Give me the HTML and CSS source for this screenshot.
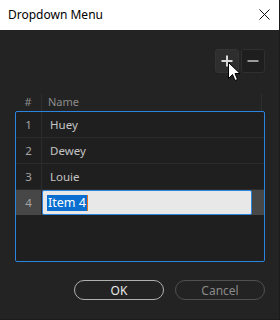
FILE: index.html
```html
<!DOCTYPE html>
<html lang="en">
<head>
    <meta charset="UTF-8">
    <title>Dropdown Menu</title>
    <link rel="stylesheet" href="styles.css">
</head>
<body>
    <div class="window">
        <div class="titlebar">
            <span class="title">Dropdown Menu</span>
            <svg class="close" width="11" height="11" viewBox="0 0 11 11">
                <path d="M0.5 0.5 L10.5 10.5 M10.5 0.5 L0.5 10.5" stroke="#111" stroke-width="1" fill="none"/>
            </svg>
        </div>

        <div class="content">
            <div class="toolbar">
                <button class="tool-btn add">
                    <svg width="12" height="12" viewBox="0 0 12 12">
                        <path d="M6 0.5 V11.5 M0.5 6 H11.5" stroke="#d8d8d8" stroke-width="2" fill="none"/>
                    </svg>
                </button>
                <button class="tool-btn remove">
                    <svg width="12" height="12" viewBox="0 0 12 12">
                        <path d="M0.5 6 H11.5" stroke="#9a9a9a" stroke-width="2" fill="none"/>
                    </svg>
                </button>
                <!-- mouse pointer over the + button -->
                <svg class="cursor" width="13" height="20" viewBox="0 0 13 20">
                    <path d="M0.5 0.5 V16.5 L4.5 12.5 L7 18.5 L9.5 17.5 L7 11.5 H12 Z" fill="#fff" stroke="#000" stroke-width="1"/>
                </svg>
            </div>

            <div class="table-head">
                <div class="col-num">#</div>
                <div class="col-name">Name</div>
            </div>

            <div class="list">
                <div class="row">
                    <div class="col-num">1</div>
                    <div class="col-name">Huey</div>
                </div>
                <div class="row">
                    <div class="col-num">2</div>
                    <div class="col-name">Dewey</div>
                </div>
                <div class="row">
                    <div class="col-num">3</div>
                    <div class="col-name">Louie</div>
                </div>
                <div class="row editing">
                    <div class="col-num">4</div>
                    <div class="col-name">
                        <div class="edit-box"><span class="selected">Item 4</span><span class="caret"></span></div>
                    </div>
                </div>
            </div>

            <div class="actions">
                <button class="btn ok">OK</button>
                <button class="btn cancel">Cancel</button>
            </div>
        </div>
    </div>
</body>
</html>
```

FILE: styles.css
```css
body {
    margin: 0;
    padding: 0;
    background-color: #232323;
    font-family: "Noto Sans", "Open Sans", sans-serif;
}

.window {
    width: 279px;
    height: 319px;
    border-right: 1px solid #1b1b1b;
    border-bottom: 1px solid #1b1b1b;
    background-color: #232323;
}

.titlebar {
    height: 30px;
    background-color: #ffffff;
    display: flex;
    align-items: center;
    justify-content: space-between;
    padding: 0 9px 0 8px;
    box-sizing: border-box;
}

.title {
    font-size: 12px;
    color: #000;
    margin-top: -1px;
}

.close {
    margin-top: -1px;
}

.content {
    padding: 19px 14px 0 15px;
}

.toolbar {
    position: relative;
    display: flex;
    justify-content: flex-end;
    gap: 2px;
}

.tool-btn {
    width: 24px;
    height: 24px;
    padding: 0;
    border: 1px solid #2f2f2f;
    border-radius: 3px;
    display: flex;
    align-items: center;
    justify-content: center;
}

.tool-btn.add {
    background-color: #2e2e2e;
    border-color: #343434;
}

.tool-btn.remove {
    background-color: #1e1e1e;
}

.cursor {
    position: absolute;
    left: 213px;
    top: 13px;
}

.table-head {
    display: flex;
    height: 17px;
    margin-top: 21px;
    font-size: 11px;
    color: #8c8c8c;
    margin-right: 3px;
    border-right: 1px solid #2e2e2e;
}

.table-head .col-num {
    width: 26px;
    border-right: 1px solid #2e2e2e;
    text-align: center;
    line-height: 15px;
}

.table-head .col-name {
    padding-left: 6px;
    line-height: 15px;
}

.list {
    height: 149px;
    border: 1px solid #2a84e0;
    border-radius: 2px;
    background-color: #1f1f1f;
}

.row {
    display: flex;
    height: 25px;
    border-bottom: 1px solid #2c2c2c;
    font-size: 11.5px;
    color: #c4c4c4;
}

.row .col-num {
    width: 25px;
    border-right: 1px solid #2c2c2c;
    text-align: center;
    line-height: 25px;
    color: #a6a6a6;
}

.row .col-name {
    flex: 1;
    padding-left: 8px;
    line-height: 25px;
}

.row.editing {
    background-color: #474747;
    border-bottom: none;
}

.row.editing .col-name {
    padding: 0 12px 0 0;
    line-height: normal;
}

.edit-box {
    height: 23px;
    background-color: #e8e8e8;
    border: 1px solid #2a84e0;
    border-radius: 2px;
    display: flex;
    align-items: center;
    padding-left: 4px;
}

.selected {
    background-color: #0a6fd0;
    color: #ffffff;
    font-size: 12.5px;
    line-height: 16px;
    padding: 0 1px;
    margin-top: 1px;
}

.caret {
    width: 1px;
    height: 16px;
    margin-top: 1px;
    background-color: #e07020;
}

.actions {
    display: flex;
    justify-content: flex-end;
    gap: 11px;
    margin-top: 18px;
}

.btn {
    width: 90px;
    height: 20px;
    border-radius: 10px;
    background-color: transparent;
    font-family: "Noto Sans", "Open Sans", sans-serif;
    font-size: 12px;
    padding: 0;
    line-height: 17px;
}

.btn.ok {
    border: 1px solid #b0b0b0;
    color: #e8e8e8;
}

.btn.cancel {
    border: 1px solid #505050;
    color: #8a8a8a;
}
```
